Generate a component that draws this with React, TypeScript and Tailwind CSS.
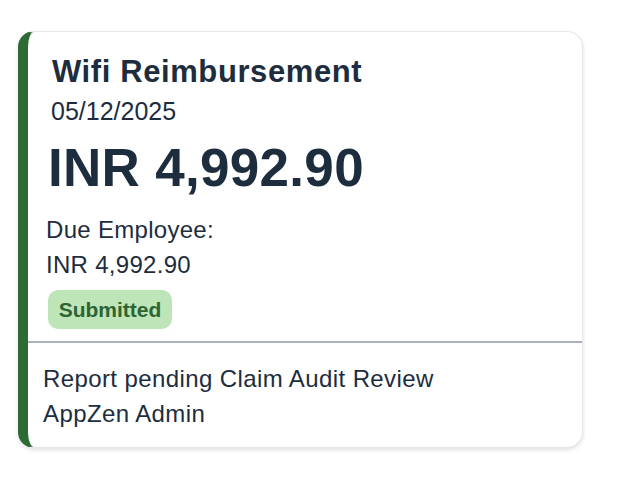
export default function App() {
  return (
    <div className="min-h-screen bg-white pt-[31px] pl-[18px]" style={{ fontFamily: '"Liberation Sans", Arial, sans-serif' }}>
      <div className="w-[565px] overflow-hidden rounded-[16px] border border-[#e6e7ea] border-l-[10px] border-l-[#2d6a35] bg-white text-[#1d2d3e] shadow-[0_2px_4px_rgba(0,0,0,0.12)]">
        <div className="pt-[22px] pb-[12px] pl-[18px]">
          <div className="ml-[6px] text-[31px] leading-[36px] font-bold tracking-[0.6px]">Wifi Reimbursement</div>
          <div className="ml-[5px] mt-[6px] text-[25px] leading-[30px]">05/12/2025</div>
          <div className="ml-[2px] mt-[12px] text-[53px] leading-[60px] font-bold tracking-[0.3px]">INR 4,992.90</div>
          <div className="mt-[14px] text-[24px] leading-[35px] tracking-[0.3px]">
            <div>Due Employee:</div>
            <div>INR 4,992.90</div>
          </div>
          <div className="mt-[8px] ml-[2px] flex h-[39px] w-[124px] items-center justify-center rounded-[10px] bg-[#bde5b7] text-[21px] font-bold text-[#2e6433]">
            Submitted
          </div>
        </div>
        <div className="h-[2px] bg-[#a9b0be]" />
        <div className="pt-[18px] pb-[16px] pl-[15px] text-[24px] leading-[35px] tracking-[0.4px]">
          <div>Report pending Claim Audit Review</div>
          <div>AppZen Admin</div>
        </div>
      </div>
    </div>
  );
}
